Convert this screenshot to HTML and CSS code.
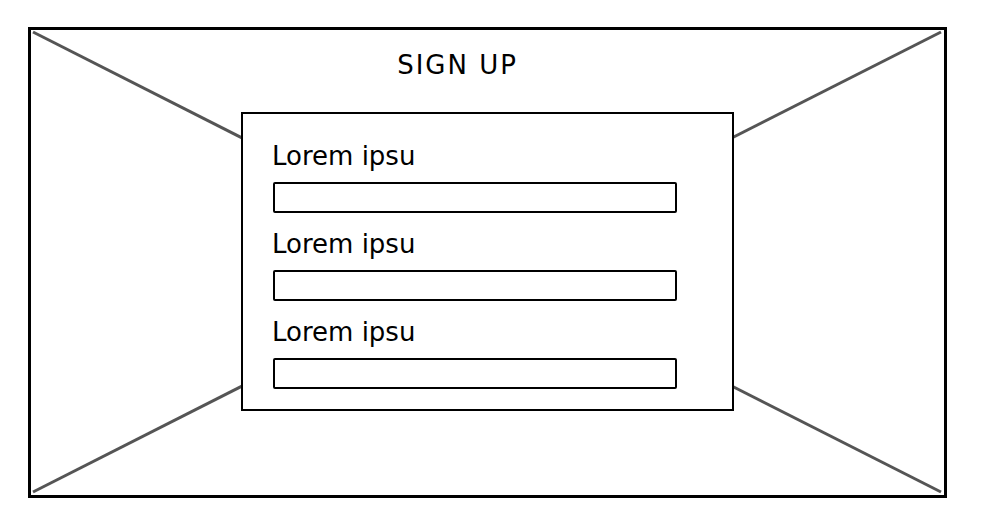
FILE: index.html
```html
<!DOCTYPE html>
<html lang="en">
<head>
    <meta charset="UTF-8">
    <meta name="viewport" content="width=device-width, initial-scale=1.0">
    <title>Sign up</title>
    <link rel="stylesheet" href="styles.css">
</head>
<body>
    <div class="frame">
        <svg class="cross" viewBox="0 0 913 465" preserveAspectRatio="none">
            <line x1="2" y1="2" x2="910" y2="462" />
            <line x1="910" y1="2" x2="2" y2="462" />
        </svg>

        <h1 class="titulo">SIGN UP</h1>

        <form class="cartao">
            <div class="campo">
                <label>Lorem ipsu</label>
                <input type="text">
            </div>
            <div class="campo">
                <label>Lorem ipsu</label>
                <input type="text">
            </div>
            <div class="campo">
                <label>Lorem ipsu</label>
                <input type="text">
            </div>
        </form>
    </div>
</body>
</html>
```

FILE: styles.css
```css
body {
    margin: 0;
    background-color: #fff;
    font-family: "DejaVu Sans", Arial, sans-serif;
    color: #000;
}

.frame {
    position: relative;
    box-sizing: border-box;
    width: 919px;
    height: 471px;
    margin: 27px 0 0 28px;
    border: 3px solid #000;
    display: flex;
    flex-direction: column;
    align-items: center;
}

/* o X do placeholder fica por baixo de tudo */
.cross {
    position: absolute;
    inset: 0;
    width: 100%;
    height: 100%;
}

.cross line {
    stroke: #555;
    stroke-width: 3;
    vector-effect: non-scaling-stroke;
}

.titulo {
    position: relative;
    margin: 20px 0 0;
    padding-right: 60px;
    font-size: 26px;
    font-weight: 400;
    line-height: 30px;
    letter-spacing: 2px;
}

.cartao {
    position: relative;
    box-sizing: border-box;
    width: 493px;
    height: 299px;
    margin-top: 32px;
    padding: 27px 0 0 30px;
    background-color: #fff;
    border: 2px solid #000;
    display: flex;
    flex-direction: column;
    gap: 16px;
}

.campo {
    display: flex;
    flex-direction: column;
    gap: 11px;
}

.campo label {
    font-size: 26px;
    line-height: 30px;
    margin-left: -1px;
}

.campo input {
    box-sizing: border-box;
    width: 404px;
    height: 31px;
    margin: 0;
    border: 2px solid #000;
    border-radius: 2px;
    background: #fff;
}
```
